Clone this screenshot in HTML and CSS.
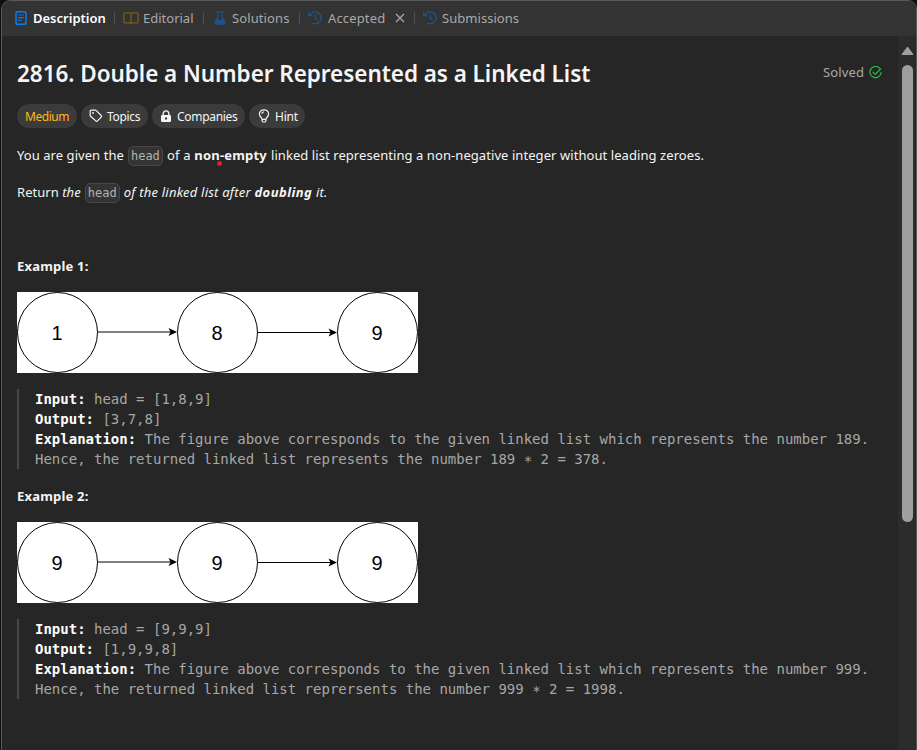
FILE: index.html
```html
<!DOCTYPE html>
<html lang="en">
<head>
<meta charset="utf-8">
<title>2816. Double a Number Represented as a Linked List</title>
<link rel="stylesheet" href="styles.css">
</head>
<body>
<svg class="defs" width="0" height="0">
  <symbol id="history" viewBox="0 0 14 14"><path d="M1.7 4.3A6 6 0 1 1 4.8 12.4M.6 1.5v3.2h3.3M7.3 3.9v3.4l2.2 1.5" fill="none" stroke="currentColor" stroke-width="1.3" stroke-linecap="round" stroke-linejoin="round"/></symbol>
</svg>
<div class="panel">
  <nav class="tabs">
    <div class="tab tab-description">
      <svg width="12" height="14" viewBox="0 0 12 14"><rect x="1" y=".8" width="10" height="12.4" rx="1.8" fill="none" stroke="currentColor" stroke-width="1.5"/><path d="M3.3 4h5.4M3.3 6.6h5.4M3.3 9.2h3.4" stroke="currentColor" stroke-width="1.2"/></svg>
      <span>Description</span>
    </div>
    <div class="tab tab-editorial">
      <svg width="16" height="13" viewBox="0 0 16 13"><path d="M8 2.2C8 1.4 7.4.9 6.5.9H1.8q-1 0-1 1v8q0 1 1 1H6q2 0 2 1.3M8 2.2C8 1.4 8.6.9 9.5.9h4.7q1 0 1 1v8q0 1-1 1H10q-2 0-2 1.3M8 2.2v10" fill="none" stroke="currentColor" stroke-width="1.3"/></svg>
      <span>Editorial</span>
    </div>
    <div class="tab tab-solutions">
      <svg width="12" height="14" viewBox="0 0 12 14"><path d="M2.4.8h7.2M4 .8v4.7L1.1 11.4M8 .8v4.7l2.9 5.9" fill="none" stroke="currentColor" stroke-width="1.3" stroke-linecap="round"/><path d="M2.4 8.5h7.2l2 3.5q.5 1.8-1.2 1.8H1.6Q-.1 13.8.4 12z" fill="currentColor"/></svg>
      <span>Solutions</span>
    </div>
    <div class="tab tab-accepted">
      <svg width="14" height="14"><use href="#history"/></svg>
      <span>Accepted</span>
      <svg class="close" width="10" height="10" viewBox="0 0 10 10"><path d="m1 1 8 8M9 1 1 9" stroke="currentColor" stroke-width="1.3"/></svg>
    </div>
    <div class="tab tab-submissions">
      <svg width="14" height="14"><use href="#history"/></svg>
      <span>Submissions</span>
    </div>
  </nav>
  <div class="body">
    <main class="content">
      <header class="heading">
        <h1>2816. Double a Number Represented as a Linked List</h1>
        <div class="solved"><span>Solved</span>
          <svg width="13" height="13" viewBox="0 0 13 13"><path d="M10.5 2.1A5.6 5.6 0 1 0 12.1 6.7M4 6.2l2.2 2.2L11.6 3" fill="none" stroke="currentColor" stroke-width="1.2" stroke-linecap="round" stroke-linejoin="round"/></svg>
        </div>
      </header>
      <div class="tags">
        <span class="tag medium"><span>Medium</span></span>
        <span class="tag topics"><svg width="14" height="14" viewBox="0 0 14 14"><path d="M1.2 2.2q0-1 1-1h4.2q.5 0 .9.4l4.9 4.9q.8.8 0 1.6l-3.8 3.8q-.8.8-1.6 0L1.6 7.3q-.4-.4-.4-.9z" fill="none" stroke="currentColor" stroke-width="1.2"/><circle cx="4" cy="4" r=".9" fill="currentColor"/></svg><span>Topics</span></span>
        <span class="tag companies"><svg width="12" height="13" viewBox="0 0 12 13"><path d="M3.2 6V3.7a2.8 2.8 0 0 1 5.6 0V6" fill="none" stroke="currentColor" stroke-width="1.4"/><path fill-rule="evenodd" d="M2.2 5h7.6Q11 5 11 6.2v4.6q0 1.2-1.2 1.2H2.2Q1 12 1 10.800V6.200Q1 5 2.200 5zM6 7.200a1.200 1.200 0 1 0 0 2.400 1.200 1.200 0 0 0 0-2.400z" fill="currentColor"/></svg><span>Companies</span></span>
        <span class="tag hint"><svg width="12" height="14" viewBox="0 0 12 14"><path d="M4.1 10.3C4.1 8.8 1.4 7.8 1.4 4.9a4.6 4.1 0 0 1 9.2 0C10.6 7.8 7.9 8.8 7.9 10.3zM4.1 10.3v1.5q0 1.2 1.2 1.2h1.4q1.2 0 1.2-1.2v-1.5M3.8 4.8Q4 3 5.8 2.9" fill="none" stroke="currentColor" stroke-width="1.2"/></svg><span>Hint</span></span>
      </div>
      <p class="statement"><span class="t1">You are given the</span> <code>head</code> <span class="t2">of a <b class="marked">non-empty</b></span> <span class="t3">linked list representing a non-negative integer without leading zeroes.</span></p>
      <p class="statement"><span class="t4">Return <i>the</i></span> <code>head</code> <i class="t5">of the linked list after <b>doubling</b> it.</i></p>
      <h2>Example 1:</h2>
      <svg class="figure" width="401" height="81" viewBox="0 0 401 81">
        <rect width="401" height="81" fill="#fff"/>
        <g fill="none" stroke="#000"><circle cx="40.5" cy="40.5" r="40"/><circle cx="200.5" cy="40.5" r="40"/><circle cx="360.5" cy="40.5" r="40"/><path d="M80.5 40h74M240.5 40.5h75"/></g>
        <path d="m160 40-8.500 4 2-4-2-4zM320 40.500l-8.500 4 2-4-2-4z"/>
        <g class="digits"><text x="40" y="47.5">1</text><text x="200" y="47.5">8</text><text x="360" y="47.5">9</text></g>
      </svg>
      <pre><span><b>Input:</b> head = [1,8,9]</span><span><b>Output:</b> [3,7,8]</span><span><b>Explanation:</b> The figure above corresponds to the given linked list which represents the number 189.</span><span>Hence, the returned linked list represents the number 189 <i class="times">*</i> 2 = 378.</span></pre>
      <h2 class="second">Example 2:</h2>
      <svg class="figure" width="401" height="81" viewBox="0 0 401 81">
        <rect width="401" height="81" fill="#fff"/>
        <g fill="none" stroke="#000"><circle cx="40.5" cy="40.5" r="40"/><circle cx="200.5" cy="40.5" r="40"/><circle cx="360.5" cy="40.5" r="40"/><path d="M80.5 40h74M240.5 40.5h75"/></g>
        <path d="m160 40-8.500 4 2-4-2-4zM320 40.500l-8.500 4 2-4-2-4z"/>
        <g class="digits"><text x="40" y="47.5">9</text><text x="200" y="47.5">9</text><text x="360" y="47.5">9</text></g>
      </svg>
      <pre><span><b>Input:</b> head = [9,9,9]</span><span><b>Output:</b> [1,9,9,8]</span><span><b>Explanation:</b> The figure above corresponds to the given linked list which represents the number 999.</span><span>Hence, the returned linked list reprersents the number 999 <i class="times">*</i> 2 = 1998.</span></pre>
    </main>
    <div class="scrollbar">
      <svg width="13" height="10" viewBox="0 0 13 10"><path d="M6.5 1 12 8.5H1z" fill="#9f9f9f" stroke="#9f9f9f" stroke-linejoin="round"/></svg>
      <div class="thumb"></div>
    </div>
  </div>
</div>
</body>
</html>
```
FILE: styles.css
```css
* { box-sizing: border-box; }
body { margin: 0; height: 750px; overflow: hidden; background: #0f0f0f; padding-left: 1px; color: #f5f5f5; font: 13px/20px "Noto Sans", "Open Sans", sans-serif; }
.defs { display: block; }
svg { display: block; flex: none; }
.panel { height: 760px; border: 1px solid #595959; border-radius: 9px; overflow: hidden; background: #262626; }
.tabs { height: 35px; background: #333; display: flex; align-items: center; padding: 0 0 1px 13px; color: #a9a9a9; }
.tab { display: flex; align-items: center; height: 14px; white-space: nowrap; }
.tab + .tab::before { content: ""; width: 1px; height: 12px; background: #505050; margin-right: 8px; }
.tab span { margin-left: 5px; }
.tab-description { width: 99px; color: #0b7bf7; }
.tab-description span { color: #fff; font-weight: 600; margin-left: 6px; }
.tab-editorial { width: 89px; }
.tab-editorial svg { color: #7c5b18; }
.tab-editorial span { margin-left: 4px; }
.tab-solutions { width: 96px; }
.tab-solutions svg { color: #20528a; margin-left: 2px; }
.tab-solutions span { margin-left: 6px; letter-spacing: .1px; }
.tab-accepted { width: 115px; }
.tab-accepted span { margin-left: 6px; letter-spacing: .15px; }
.tab-accepted svg:first-child, .tab-submissions svg { color: #245286; }
.tab-submissions span { letter-spacing: .04px; }
.tab .close { margin-left: 10px; color: #a9a9a9; }
.body { display: flex; height: 723px; }
.content { width: 896px; padding: 20px 16px 0 15px; }
.heading { height: 34px; display: flex; justify-content: space-between; align-items: center; }
h1 { margin: 2px 0 0; font-size: 22.5px; line-height: 34px; font-weight: 600; letter-spacing: -.05px; white-space: nowrap; }
.solved { display: flex; align-items: center; gap: 5px; color: #a9a9a9; height: 30px; margin-bottom: 2px; letter-spacing: .1px; }
.solved svg { color: #2cbb4a; }
.tags { display: flex; gap: 4px; margin-top: 14px; font-size: 12px; }
.tag { height: 24px; border-radius: 12px; background: #3b3b3b; display: flex; align-items: center; padding-left: 8px; gap: 4px; white-space: nowrap; }
.tag > span { margin-top: 2px; }
.medium { width: 60px; color: #ffb81c; letter-spacing: -.45px; }
.topics { width: 67px; letter-spacing: -.3px; }
.companies { width: 93px; gap: 5px; letter-spacing: -.3px; }
.hint { width: 56px; gap: 5px; padding-left: 9px; letter-spacing: -.2px; }
.statement { margin: 17px 0 0; height: 20px; display: flex; align-items: center; white-space: nowrap; }
.t1 { letter-spacing: .06px; }
code { width: 35px; height: 20px; font: 12px/18px "DejaVu Sans Mono", monospace; color: #b1b1b1; background: #343434; border: 1px solid #484848; border-radius: 5px; text-align: center; margin: 1px 4px 0; }
.t2 { letter-spacing: .2px; }
.marked { position: relative; }
.marked::after { content: ""; position: absolute; left: 23px; top: 15px; width: 5px; height: 5px; border-radius: 50%; background: #e51c23; }
.t3 { margin-left: 4px; letter-spacing: .07px; }
.t4 { letter-spacing: .04px; }
.t5 { letter-spacing: .22px; }
.t5 b { letter-spacing: .45px; }
h2 { margin: 54px 0 16px; font-size: 13px; line-height: 20px; font-weight: 700; letter-spacing: .2px; }
h2.second { margin-top: 17px; }
.digits { font: 20px "Liberation Sans", sans-serif; text-anchor: middle; }
pre { margin: 16px 0 0; border-left: 2px solid #474747; padding-left: 16px; height: 80px; font: 14px/20px "DejaVu Sans Mono", monospace; color: #a6a6a6; }
pre span { display: block; letter-spacing: -.003px; }
pre b { color: #fff; }
.times { font-style: normal; position: relative; top: 2px; }
.scrollbar { width: 17px; background: #2c2c2c; padding: 10px 0 0 3px; }
.thumb { width: 11px; height: 457px; border-radius: 6px; background: #9f9f9f; margin: 9px 0 0 1px; }
```
